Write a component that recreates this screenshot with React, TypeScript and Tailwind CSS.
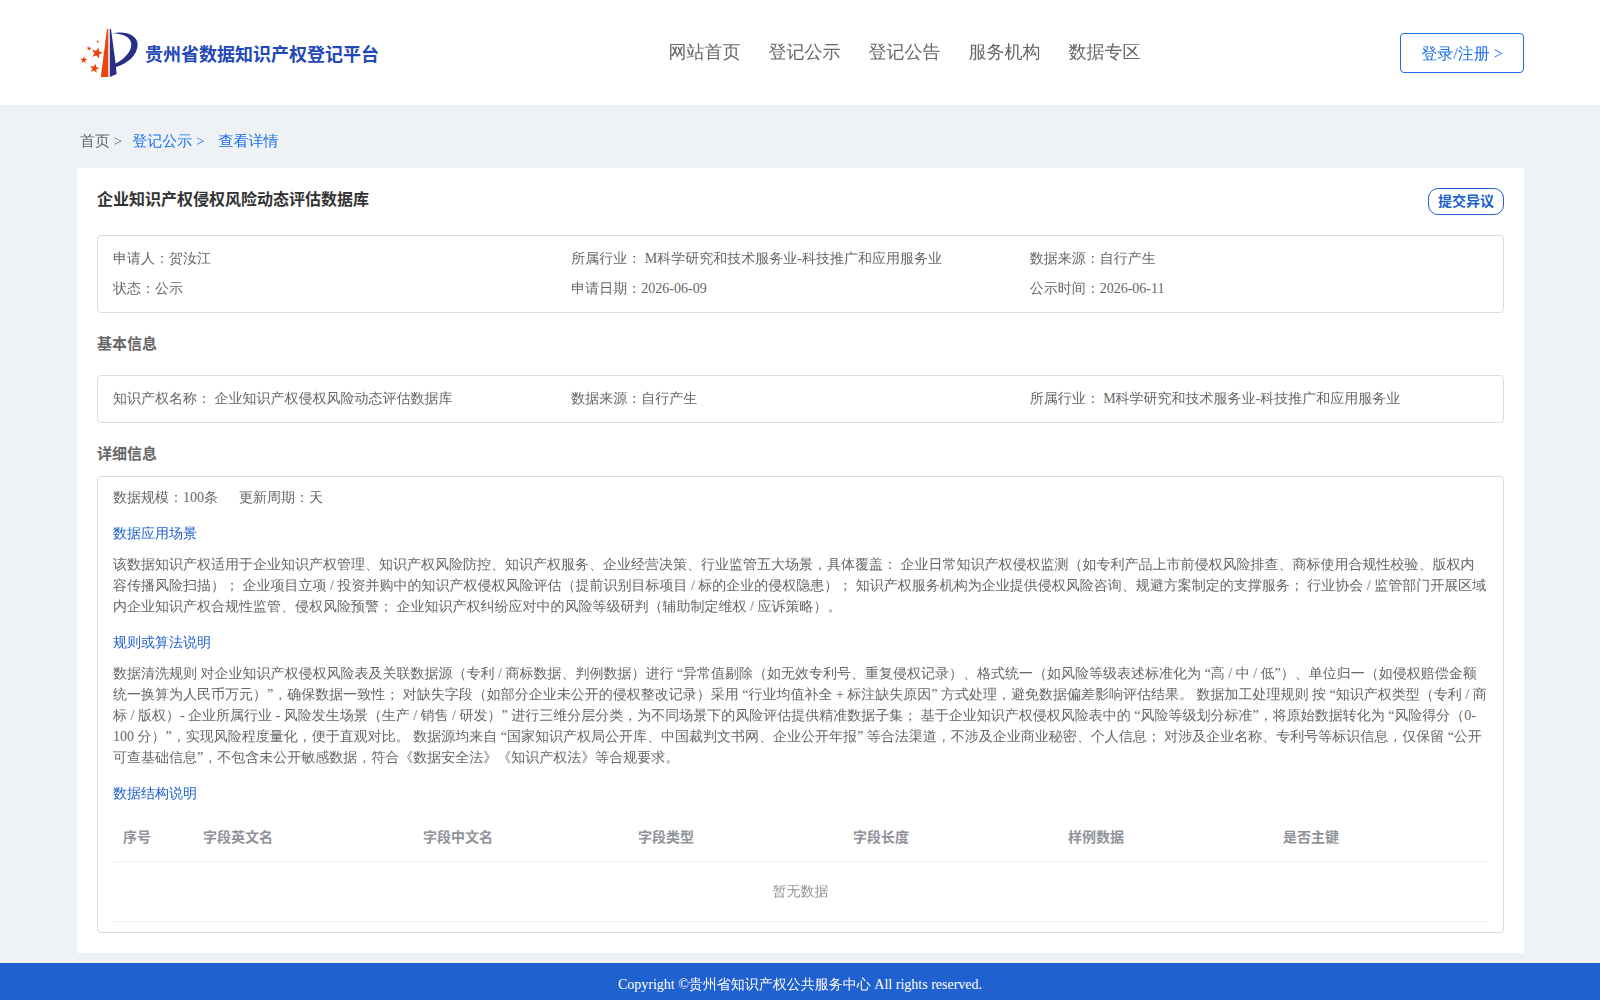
import React from 'react';

const navItems = ['网站首页', '登记公示', '登记公告', '服务机构', '数据专区'];

const summary = [
  ['申请人：', '贺汝江'],
  ['所属行业： ', 'M科学研究和技术服务业-科技推广和应用服务业'],
  ['数据来源：', '自行产生'],
  ['状态：', '公示'],
  ['申请日期：', '2026-06-09'],
  ['公示时间：', '2026-06-11'],
];

const basicInfo = [
  ['知识产权名称： ', '企业知识产权侵权风险动态评估数据库'],
  ['数据来源：', '自行产生'],
  ['所属行业： ', 'M科学研究和技术服务业-科技推广和应用服务业'],
];

const columns = ['序号', '字段英文名', '字段中文名', '字段类型', '字段长度', '样例数据', '是否主键'];

const scene =
  '该数据知识产权适用于企业知识产权管理、知识产权风险防控、知识产权服务、企业经营决策、行业监管五大场景，具体覆盖： 企业日常知识产权侵权监测（如专利产品上市前侵权风险排查、商标使用合规性校验、版权内容传播风险扫描）； 企业项目立项 / 投资并购中的知识产权侵权风险评估（提前识别目标项目 / 标的企业的侵权隐患）； 知识产权服务机构为企业提供侵权风险咨询、规避方案制定的支撑服务； 行业协会 / 监管部门开展区域内企业知识产权合规性监管、侵权风险预警； 企业知识产权纠纷应对中的风险等级研判（辅助制定维权 / 应诉策略）。';

const rules =
  '数据清洗规则 对企业知识产权侵权风险表及关联数据源（专利 / 商标数据、判例数据）进行 “异常值剔除（如无效专利号、重复侵权记录）、格式统一（如风险等级表述标准化为 “高 / 中 / 低”）、单位归一（如侵权赔偿金额统一换算为人民币万元）”，确保数据一致性； 对缺失字段（如部分企业未公开的侵权整改记录）采用 “行业均值补全 + 标注缺失原因” 方式处理，避免数据偏差影响评估结果。 数据加工处理规则 按 “知识产权类型（专利 / 商标 / 版权）- 企业所属行业 - 风险发生场景（生产 / 销售 / 研发）” 进行三维分层分类，为不同场景下的风险评估提供精准数据子集； 基于企业知识产权侵权风险表中的 “风险等级划分标准”，将原始数据转化为 “风险得分（0-100 分）”，实现风险程度量化，便于直观对比。 数据源均来自 “国家知识产权局公开库、中国裁判文书网、企业公开年报” 等合法渠道，不涉及企业商业秘密、个人信息； 对涉及企业名称、专利号等标识信息，仅保留 “公开可查基础信息”，不包含未公开敏感数据，符合《数据安全法》《知识产权法》等合规要求。';

// WenQuanYi has no bold weight, so bold text goes straight to Noto
const bold = "font-['Liberation_Serif','Noto_Sans_CJK_SC',serif] font-bold";

// cx, cy, radius, rotation in degrees
const stars = [
  [17, 25, 6, 15],
  [14.5, 40.5, 5, 12],
  [3.7, 32, 3.8, 5],
  [9, 20.5, 2.5, 20],
  [17.7, 13.5, 1.5, 0],
];

function starPoints([cx, cy, r, rot]: number[]) {
  return Array.from({ length: 10 }, (_, i) => {
    const radius = i % 2 ? r * 0.42 : r;
    const angle = ((i * 36 + rot - 90) * Math.PI) / 180;
    return `${cx + radius * Math.cos(angle)},${cy + radius * Math.sin(angle)}`;
  }).join(' ');
}

function Logo() {
  return (
    <svg width="58" height="50" viewBox="0 0 58 50" aria-hidden="true">
      <path d="M27 1h1.300V49h-7.500z" fill="#e8450f" />
      <path d="M29.800 1H31l4.600 34.500C42 32.500 51.300 25 51.300 16.500 51.300 9 43 5.800 32.300 5.200 46 2.500 57.600 7 57.600 16.500 57.600 27 48 35.500 35.900 39l.8 7-6.900 3z" fill="#2a2f86" />
      {stars.map((star) => (
        <polygon key={star.join()} points={starPoints(star)} fill="#e8450f" />
      ))}
    </svg>
  );
}

function InfoBox({ items }: { items: string[][] }) {
  return (
    <dl className="grid grid-cols-3 rounded-sm border border-[#dcdcdc] px-[15px] py-2 text-sm leading-[30px]">
      {items.map(([label, value]) => (
        <div key={label} className="flex whitespace-pre">
          <dt>{label}</dt>
          <dd>{value}</dd>
        </div>
      ))}
    </dl>
  );
}

function App() {
  return (
    <div className="min-h-screen bg-[#eef2f5] font-['Liberation_Serif','WenQuanYi_Zen_Hei','Noto_Sans_CJK_SC',serif] text-sm leading-[21px] text-[#666] [text-spacing-trim:space-all]">
      {/* Header */}
      <header className="flex h-[105px] items-center justify-between bg-white pr-[76px] pl-20">
        <a href="#" className="flex items-center gap-[7px]">
          <Logo />
          <span className={`${bold} pt-1 text-lg text-[#2348b8]`}>贵州省数据知识产权登记平台</span>
        </a>
        <nav className="ml-[30px] flex gap-7 pb-0.5 text-lg">
          {navItems.map((item) => (
            <a key={item} href="#">{item}</a>
          ))}
        </nav>
        <button className="h-10 w-[124px] rounded border border-[#1a6fef] pt-0.5 text-base text-[#1a6fef]">登录/注册 &gt;</button>
      </header>

      <main className="pr-[76px] pb-[10px] pl-[77px]">
        {/* Breadcrumb */}
        <nav className="flex gap-[10px] pt-[25px] pb-4 pl-[3px] text-[15px] leading-[22px]">
          <a href="#">首页 &gt;</a>
          <a href="#" className="text-[#1a6fef]">登记公示 &gt;</a>
          <a href="#" className="ml-1 text-[#1a6fef]">查看详情</a>
        </nav>

        <article className="bg-white p-5">
          <div className="mb-5 flex items-start justify-between">
            <h1 className={`${bold} text-base text-[#333]`}>企业知识产权侵权风险动态评估数据库</h1>
            <button className={`${bold} h-[27px] w-[76px] rounded-[10px] border border-[#2060cf] text-[#2060cf]`}>提交异议</button>
          </div>
          <InfoBox items={summary} />

          <h2 className={`${bold} my-5 text-[15px] leading-[22px]`}>基本信息</h2>
          <InfoBox items={basicInfo} />

          <h2 className={`${bold} mt-5 mb-[11px] text-[15px] leading-[22px]`}>详细信息</h2>
          <section className="rounded-sm border border-[#dcdcdc] px-[15px] py-[10px]">
            <div className="flex gap-[21px]">
              <span>数据规模：100条</span>
              <span>更新周期：天</span>
            </div>

            <h3 className="mt-[15px] mb-[10px] text-[#2060cf]">数据应用场景</h3>
            <p>{scene}</p>

            <h3 className="mt-[15px] mb-[10px] text-[#2060cf]">规则或算法说明</h3>
            <p>{rules}</p>

            <h3 className="mt-[15px] mb-[10px] text-[#2060cf]">数据结构说明</h3>
            <table className="w-full table-fixed border-separate border-spacing-0 text-[#909399]">
              <colgroup>
                <col className="w-20" />
                <col className="w-[220px]" />
                <col span={5} />
              </colgroup>
              <thead>
                <tr>
                  {columns.map((name) => (
                    <th key={name} className={`${bold} h-12 border-b border-[#ebeef5] px-[10px] text-left`}>{name}</th>
                  ))}
                </tr>
              </thead>
              <tbody>
                <tr>
                  <td colSpan={7} className="h-[60px] border-b border-[#ebeef5] text-center">暂无数据</td>
                </tr>
              </tbody>
            </table>
          </section>
        </article>
      </main>

      <footer className="bg-[#2060cf] py-[11px] text-center text-white">
        Copyright ©贵州省知识产权公共服务中心 All rights reserved.
      </footer>
    </div>
  );
}

export default App;
